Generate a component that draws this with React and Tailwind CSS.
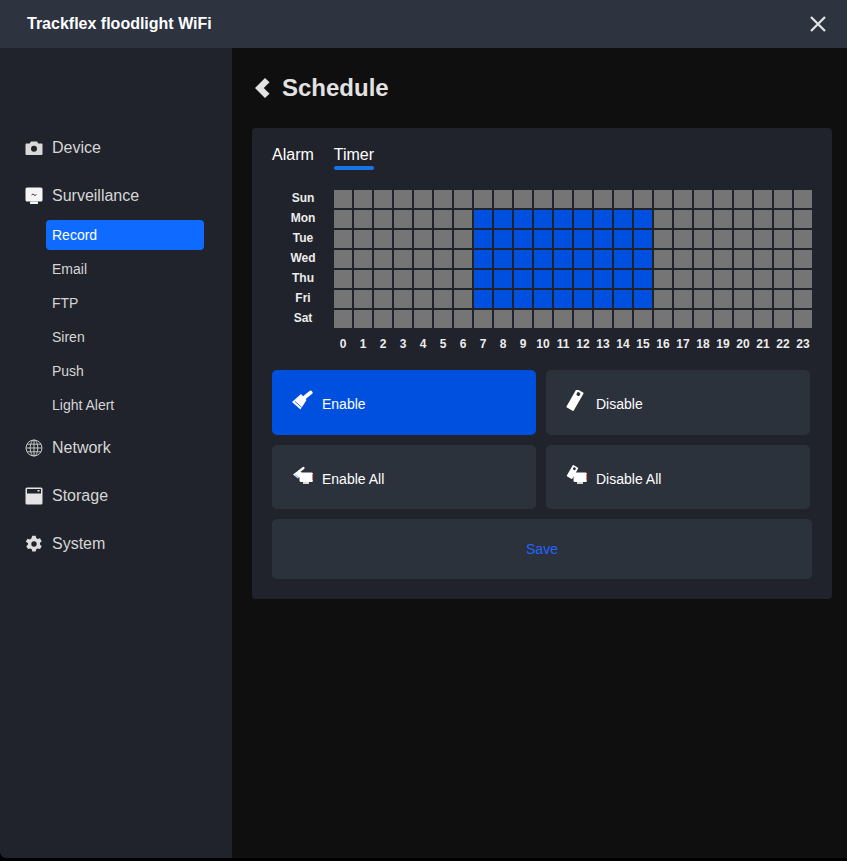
const days = ["Sun", "Mon", "Tue", "Wed", "Thu", "Fri", "Sat"];
const hours = Array.from({ length: 24 }, (_, i) => i);

function Camera() {
  return (
    <svg width="18" height="18" viewBox="0 0 18 18" className="shrink-0">
      <path fill="#d9d9d9" fillRule="evenodd" d="M1.500 4.500h3.200L6 2.500h6l1.300 2h3.200q1 0 1 1v9.500q0 1-1 1h-15q-1 0-1-1V5.500q0-1 1-1ZM9 6.800a3 3 0 1 0 0 6 3 3 0 0 0 0-6Z" />
    </svg>
  );
}
function Monitor() {
  return (
    <svg width="18" height="18" viewBox="0 0 18 18" className="shrink-0">
      <rect x="0.500" y="0.500" width="17" height="14" rx="1.500" fill="#f5f5f5" />
      <rect x="5" y="14.500" width="8" height="2.500" rx="0.500" fill="#f5f5f5" />
      <path d="M6.500 8l1.500-1 2 1.500 1.500-1" fill="none" stroke="#3a3f4a" strokeWidth="1" />
    </svg>
  );
}
function Globe() {
  return (
    <svg width="18" height="18" viewBox="0 0 18 18" fill="none" stroke="#c4c4c4" strokeWidth="1" className="shrink-0">
      <circle cx="9" cy="9" r="8" />
      <ellipse cx="9" cy="9" rx="3.800" ry="8" />
      <path d="M9 1v16M1 9h16M2 5.200h14M2 12.800h14" />
    </svg>
  );
}
function Storage() {
  return (
    <svg width="18" height="18" viewBox="0 0 18 18" className="shrink-0">
      <path fill="#e4e4e4" fillRule="evenodd" d="M2 .5h14q1.500 0 1.500 1.500v14q0 1.500-1.500 1.500H2Q.5 17.500.5 16V2Q.5.500 2 .5ZM2 2v4.500h14V2Zm10.500 1h2v1.500h-2Z" />
    </svg>
  );
}
function Gear() {
  return (
    <svg width="18" height="18" viewBox="0 0 18 18" className="shrink-0">
      <path fill="#dedede" fillRule="evenodd" d="M7.300.8h3.400l.5 2.300 1.500.9 2.300-.7 1.700 2.900-1.700 1.600v1.800l1.700 1.600-1.700 2.900-2.300-.7-1.500.9-.5 2.300H7.300l-.5-2.300-1.500-.9-2.300.7-1.700-2.900 1.700-1.600V8.200L.8 6.600l1.700-2.900 2.300.7 1.500-.9ZM9 6.300a2.700 2.700 0 1 0 0 5.400 2.700 2.700 0 0 0 0-5.400Z" />
    </svg>
  );
}
function Brush({ stripe }) {
  return (
    <svg width="21" height="20" viewBox="0 0 21 20" className="shrink-0">
      <path d="M12.500 7.500L18.700 2.600" stroke="#fff" strokeWidth="3.800" strokeLinecap="round" fill="none" />
      <path fill="#fff" d="M0 12L9 4l5.500 6L8.500 19.500Z" />
      <path d="M2.800 11.200L9.800 17.500" stroke={stripe} strokeWidth="0.800" />
    </svg>
  );
}
function Tag() {
  return (
    <svg width="18" height="21" viewBox="0 0 18 21" className="shrink-0">
      <g transform="rotate(30 9 10)">
        <rect x="4.800" y="-0.500" width="8.400" height="21" rx="1" fill="#fff" />
        <circle cx="9" cy="3.200" r="1.900" fill="#2c323c" />
      </g>
    </svg>
  );
}
function Screen() {
  return (
    <g>
      <rect x="7.500" y="7.500" width="13.500" height="9.500" rx="1.500" fill="#fff" />
      <path d="M20.700 9v6.500" stroke="#c9302c" strokeWidth="0.800" />
      <rect x="11" y="17" width="6" height="2" fill="#d8d8d8" />
    </g>
  );
}
function BrushAll() {
  return (
    <svg width="22" height="20" viewBox="0 0 22 20" className="shrink-0">
      <path d="M7.500 6L11.500 3" stroke="#fff" strokeWidth="2.200" strokeLinecap="round" />
      <path fill="#fff" d="M1 9.500L7 5l4 4.500-5 4Z" />
      <path d="M3 9.500L7 13" stroke="#5b8def" strokeWidth="0.800" />
      <Screen />
    </svg>
  );
}
function TagAll() {
  return (
    <svg width="22" height="20" viewBox="0 0 22 20" className="shrink-0">
      <g transform="rotate(30 6.500 7)">
        <rect x="3.300" y="0.500" width="6.400" height="13" rx="1" fill="#fff" />
        <circle cx="6.500" cy="3.200" r="1.400" fill="#2c323c" />
      </g>
      <Screen />
    </svg>
  );
}

function NavItem({ icon, label }) {
  return (
    <div className="flex h-12 items-center gap-[9px] px-[25px] pt-[2px] text-base text-[#d6d6d6]">
      {icon}
      <span>{label}</span>
    </div>
  );
}

function SubItem({ label, active }) {
  return (
    <div
      className={
        active
          ? "flex h-[30px] items-center rounded-[4px] bg-[#0f6bff] px-[6px] text-sm text-white"
          : "flex h-[30px] items-center rounded-[4px] px-[6px] text-sm text-[#d6d6d6]"
      }
    >
      {label}
    </div>
  );
}

function ActionButton({ icon, label, active }) {
  return (
    <div
      className={
        (active ? "bg-[#0050e0] " : "bg-[#2c323c] ") +
        "flex items-start rounded-[5px] pl-[20px] text-sm text-white"
      }
    >
      <span className="mt-[20px] flex w-[30px]">{icon}</span>
      <span className="mt-[25px] leading-[18px]">{label}</span>
    </div>
  );
}

export default function App() {
  return (
    <div className="h-[861px] w-[847px] overflow-hidden bg-black font-['Liberation_Sans',Arial,sans-serif]">
      <header className="flex h-12 items-center justify-between bg-[#2d333f] pl-[27px] pr-[21px]">
        <h1 className="text-base font-bold text-white">Trackflex floodlight WiFi</h1>
        <svg width="16" height="16" viewBox="0 0 16 16" stroke="#e2e2e2" strokeWidth="2.300" fill="none">
          <path d="M1 1l14 14M15 1L1 15" />
        </svg>
      </header>
      <div className="flex h-[810px]">
        <aside className="w-[232px] shrink-0 rounded-bl-[6px] bg-[#20232b] pt-[75px]">
          <NavItem icon={<Camera />} label="Device" />
          <NavItem icon={<Monitor />} label="Surveillance" />
          <div className="flex flex-col gap-1 pb-[3px] pl-[46px] pr-[28px] pt-px">
            <SubItem label="Record" active />
            <SubItem label="Email" />
            <SubItem label="FTP" />
            <SubItem label="Siren" />
            <SubItem label="Push" />
            <SubItem label="Light Alert" />
          </div>
          <NavItem icon={<Globe />} label="Network" />
          <NavItem icon={<Storage />} label="Storage" />
          <NavItem icon={<Gear />} label="System" />
        </aside>
        <main className="flex-1 bg-[#0f0f0f] pl-[20px] pr-[15px]">
          <div className="flex h-20 items-center pl-[3px]">
            <svg width="16" height="20" viewBox="0 0 16 20" className="mr-[11px] shrink-0">
              <path fill="#e2e2e2" d="M0 10L10 0l4.500 4.300L8.800 10l5.700 5.700L10 20Z" />
            </svg>
            <h2 className="text-2xl font-bold text-[#e2e2e2]">Schedule</h2>
          </div>
          <section className="h-[471px] w-[580px] rounded-[4px] bg-[#20232b] p-5">
            <div className="flex gap-5 text-base text-white">
              <div className="leading-[13px]">Alarm</div>
              <div>
                <div className="leading-[13px]">Timer</div>
                <div className="mt-[5px] h-1 w-10 rounded-sm bg-[#1a73e8]" />
              </div>
            </div>
            <div className="mt-5 flex">
              <div className="flex w-[62px] shrink-0 flex-col">
                {days.map((d) => (
                  <div key={d} className="flex h-5 items-center justify-center pb-[4px] text-xs font-bold text-[#ececec]">
                    {d}
                  </div>
                ))}
              </div>
              <div>
                <div className="grid grid-cols-[repeat(24,18px)] grid-rows-[repeat(7,18px)] gap-[2px]">
                  {days.map((d, r) =>
                    hours.map((h) => (
                      <div
                        key={d + h}
                        className={r >= 1 && r <= 5 && h >= 7 && h <= 15 ? "bg-[#0050e0]" : "bg-[#757575]"}
                      />
                    ))
                  )}
                </div>
                <div className="mt-[6px] grid grid-cols-[repeat(24,18px)] gap-[2px]">
                  {hours.map((h) => (
                    <div key={h} className="flex h-5 items-center justify-center text-xs font-bold text-[#ececec]">
                      {h}
                    </div>
                  ))}
                </div>
              </div>
            </div>
            <div className="mt-[16px] grid grid-cols-[264px_264px] grid-rows-[65px_64px] gap-[10px]">
              <ActionButton active icon={<Brush stripe="#0050e0" />} label="Enable" />
              <ActionButton icon={<Tag />} label="Disable" />
              <ActionButton icon={<BrushAll />} label="Enable All" />
              <ActionButton icon={<TagAll />} label="Disable All" />
            </div>
            <div className="mt-[10px] flex h-[60px] w-[540px] items-center justify-center rounded-[5px] bg-[#2c323c] text-sm text-[#2065ff]">
              Save
            </div>
          </section>
        </main>
      </div>
    </div>
  );
}
